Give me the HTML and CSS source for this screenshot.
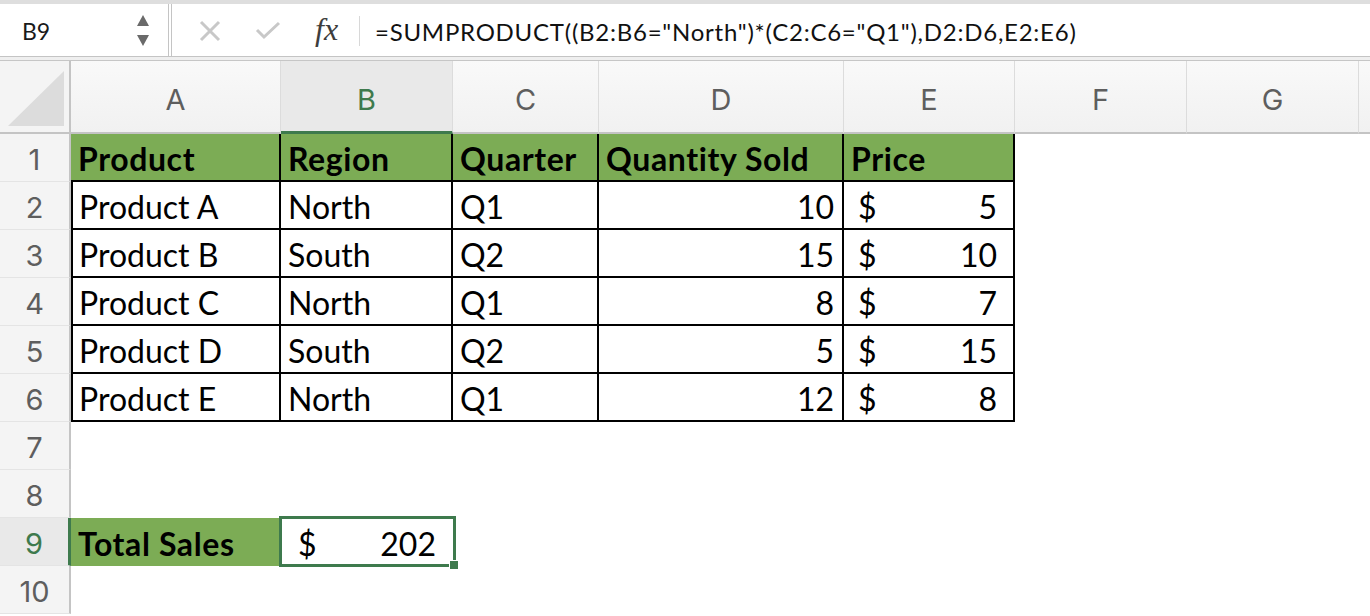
FILE: index.html
```html
<!DOCTYPE html>
<html>
<head>
<meta charset="utf-8">
<link rel="stylesheet" href="styles.css">
</head>
<body>
<div class="formula-bar">
  <div class="namebox">
    <span class="namebox-text">B9</span>
    <svg class="spinner" width="14" height="32" viewBox="0 0 14 32"><polygon points="7,0 13,11 1,11" fill="#6a6a6a"/><polygon points="1,20 13,20 7,31" fill="#6a6a6a"/></svg>
  </div>
  <div class="fb-tools">
    <svg class="icon-x" width="22" height="22" viewBox="0 0 22 22"><path d="M2 2 L20 20 M20 2 L2 20" stroke="#c8c8c8" stroke-width="3" fill="none"/></svg>
    <svg class="icon-check" width="26" height="20" viewBox="0 0 26 20"><path d="M2 9 L9 16 L24 2" stroke="#c8c8c8" stroke-width="3" fill="none"/></svg>
    <span class="fx">fx</span>
    <span class="fb-divider"></span>
    <span class="formula">=SUMPRODUCT((B2:B6="North")*(C2:C6="Q1"),D2:D6,E2:E6)</span>
  </div>
</div>
<div class="bar-gap"></div>
<div class="sheet">
  <!-- header row -->
  <div class="corner"><svg width="60" height="58" viewBox="0 0 60 58"><polygon points="2,56 58,1 58,56" fill="#dcdcdc"/></svg></div>
  <div class="colhdr">A</div>
  <div class="colhdr active">B</div>
  <div class="colhdr">C</div>
  <div class="colhdr">D</div>
  <div class="colhdr">E</div>
  <div class="colhdr">F</div>
  <div class="colhdr">G</div>
  <div class="colhdr"></div>

  <!-- row 1 -->
  <div class="rowhdr">1</div>
  <div class="c hd">Product</div>
  <div class="c hd">Region</div>
  <div class="c hd">Quarter</div>
  <div class="c hd">Quantity Sold</div>
  <div class="c hd">Price</div>
  <div class="c"></div><div class="c"></div><div class="c"></div>

  <!-- row 2 -->
  <div class="rowhdr">2</div>
  <div class="c bd first">Product A</div>
  <div class="c bd">North</div>
  <div class="c bd">Q1</div>
  <div class="c bd num">10</div>
  <div class="c bd acct"><span>$</span><span>5</span></div>
  <div class="c"></div><div class="c"></div><div class="c"></div>

  <!-- row 3 -->
  <div class="rowhdr">3</div>
  <div class="c bd first">Product B</div>
  <div class="c bd">South</div>
  <div class="c bd">Q2</div>
  <div class="c bd num">15</div>
  <div class="c bd acct"><span>$</span><span>10</span></div>
  <div class="c"></div><div class="c"></div><div class="c"></div>

  <!-- row 4 -->
  <div class="rowhdr">4</div>
  <div class="c bd first">Product C</div>
  <div class="c bd">North</div>
  <div class="c bd">Q1</div>
  <div class="c bd num">8</div>
  <div class="c bd acct"><span>$</span><span>7</span></div>
  <div class="c"></div><div class="c"></div><div class="c"></div>

  <!-- row 5 -->
  <div class="rowhdr">5</div>
  <div class="c bd first">Product D</div>
  <div class="c bd">South</div>
  <div class="c bd">Q2</div>
  <div class="c bd num">5</div>
  <div class="c bd acct"><span>$</span><span>15</span></div>
  <div class="c"></div><div class="c"></div><div class="c"></div>

  <!-- row 6 -->
  <div class="rowhdr">6</div>
  <div class="c bd first">Product E</div>
  <div class="c bd">North</div>
  <div class="c bd">Q1</div>
  <div class="c bd num">12</div>
  <div class="c bd acct"><span>$</span><span>8</span></div>
  <div class="c"></div><div class="c"></div><div class="c"></div>

  <!-- row 7 -->
  <div class="rowhdr">7</div>
  <div class="c"></div><div class="c"></div><div class="c"></div><div class="c"></div><div class="c"></div><div class="c"></div><div class="c"></div><div class="c"></div>

  <!-- row 8 -->
  <div class="rowhdr">8</div>
  <div class="c"></div><div class="c"></div><div class="c"></div><div class="c"></div><div class="c"></div><div class="c"></div><div class="c"></div><div class="c"></div>

  <!-- row 9 -->
  <div class="rowhdr active">9</div>
  <div class="c total">Total Sales</div>
  <div class="c acct total-val selected"><span>$</span><span>202</span><div class="sel"><span class="handle"></span></div></div>
  <div class="c"></div><div class="c"></div><div class="c"></div><div class="c"></div><div class="c"></div><div class="c"></div>

  <!-- row 10 -->
  <div class="rowhdr">10</div>
  <div class="c"></div><div class="c"></div><div class="c"></div><div class="c"></div><div class="c"></div><div class="c"></div><div class="c"></div><div class="c"></div>
</div>
</body>
</html>
```

FILE: styles.css
```css
* { box-sizing: border-box; }

html, body {
  margin: 0;
  padding: 0;
  background: #ffffff;
}

body {
  width: 1370px;
  height: 616px;
  overflow: hidden;
  font-family: "Lato", "Noto Sans", sans-serif;
}

/* ---------- formula bar ---------- */
.formula-bar {
  display: flex;
  height: 57px;
  border-top: 4px solid #dedede;
  border-bottom: 1px solid #c4c4c4;
  background: #ffffff;
}

.namebox {
  width: 172px;
  display: flex;
  align-items: center;
  justify-content: space-between;
  padding: 0 18px 0 22px;
  border-right: 4px double #c4c4c4;
}

.namebox-text {
  font-size: 23px;
  color: #1a1a1a;
  padding-top: 2px;
}

.spinner {
  margin-top: 2px;
}

.fb-tools {
  flex: 1;
  display: flex;
  align-items: center;
  padding-left: 27px;
  padding-top: 2px;
}

.icon-x { margin-right: 34px; }
.icon-check { margin-right: 34px; }

.fx {
  font-family: "Liberation Serif", "DejaVu Serif", serif;
  font-style: italic;
  font-size: 32px;
  color: #3d3d3d;
  width: 31px;
  margin-right: 13px;
  line-height: 1;
  margin-top: -4px;
}

.fb-divider {
  width: 1px;
  height: 30px;
  background: #d8d8d8;
  margin-right: 15px;
}

.formula {
  font-size: 24px;
  letter-spacing: 0.75px;
  color: #111111;
  white-space: nowrap;
}

.bar-gap {
  height: 4px;
  background: #efefef;
  border-bottom: 1px solid #c6c6c6;
}

/* ---------- sheet grid ---------- */
.sheet {
  display: grid;
  grid-template-columns: 71px 210px 172px 146px 245px 171px 172px 172px 1fr;
  grid-template-rows: 73px repeat(10, 48px);
}

.corner {
  background: #f4f4f4;
  border-right: 2px solid #c4c4c4;
  border-bottom: 2px solid #c4c4c4;
  display: flex;
  align-items: flex-end;
  justify-content: flex-end;
  padding: 0 3px 4px 0;
}

.colhdr {
  background: linear-gradient(#f9f9f9, #f1f1f1);
  border-right: 1px solid #dcdcdc;
  border-bottom: 2px solid #c4c4c4;
  display: flex;
  align-items: center;
  justify-content: center;
  padding-top: 6px;
  font-family: "Inter", "Noto Sans", sans-serif;
  font-size: 29px;
  color: #5e5e5e;
}

.colhdr.active {
  background: #e9e9e9;
  border-bottom: 3px solid #3e7a4d;
  color: #3e7a4d;
}

.rowhdr {
  background: #f4f4f4;
  border-right: 2px solid #c4c4c4;
  border-bottom: 1px solid #e4e4e4;
  display: flex;
  align-items: center;
  justify-content: center;
  padding-top: 3px;
  font-family: "Inter", "Noto Sans", sans-serif;
  font-size: 29px;
  color: #5e5e5e;
}

.rowhdr.active {
  background: #e9e9e9;
  border-right: 3px solid #3e7a4d;
  color: #3e7a4d;
}

/* ---------- cells ---------- */
.c {
  display: flex;
  align-items: center;
  padding: 3px 8px 0 7px;
  font-size: 32px;
  color: #000000;
  white-space: nowrap;
  overflow: visible;
}

.hd {
  background: #7cac55;
  font-weight: 700;
  letter-spacing: 0.6px;
  border-right: 2px solid #000000;
  border-bottom: 2px solid #000000;
}

.bd {
  border-right: 2px solid #000000;
  border-bottom: 2px solid #000000;
}

.first {
  border-left: 2px solid #000000;
  padding-left: 6px;
}

.num {
  justify-content: flex-end;
}

.acct {
  justify-content: space-between;
  padding-left: 14px;
  padding-right: 16px;
}

.total {
  background: #7cac55;
  font-weight: 700;
  letter-spacing: 0.6px;
}

.selected {
  position: relative;
  padding-left: 17px;
  padding-right: 17px;
}

.sel {
  position: absolute;
  left: -2px;
  top: -2px;
  right: -3px;
  bottom: -1px;
  border: 3px solid #3e7a4d;
}

.handle {
  position: absolute;
  right: -6px;
  bottom: -6px;
  width: 10px;
  height: 10px;
  background: #3e7a4d;
  border: 1px solid #ffffff;
}
```
